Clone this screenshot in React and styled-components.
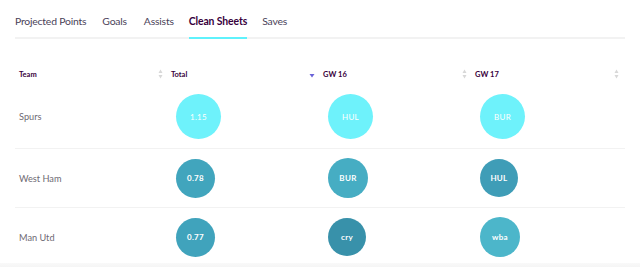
import React from 'react';
import styled, { createGlobalStyle } from 'styled-components';

const GlobalStyle = createGlobalStyle`
body {
  margin: 0;
  background: #fff;
  font-family: Lato, "Open Sans", sans-serif;
}
`;

const Page = styled.div`
padding: 0 15px;
width: 610px;
`;

const Tabs = styled.div`
display: flex;
border-bottom: 2px solid #f2f2f2;
height: 37px;
`;

const Tab = styled.div`
font-size: 10.4px;
letter-spacing: ${p => (p.active ? '-0.1px' : '-0.2px')};
line-height: 14px;
padding-top: 14px;
margin-right: ${p => p.gap}px;
color: ${p => (p.active ? '#37003c' : '#4a4258')};
font-weight: ${p => (p.active ? 700 : 400)};
border-bottom: 2px solid ${p => (p.active ? '#5ff2fc' : 'transparent')};
margin-bottom: -2px;
`;

const Table = styled.div`
margin-top: 24px;
`;

const Row = styled.div`
display: grid;
grid-template-columns: repeat(4, 152px);
align-items: center;
padding: 9px 0;
border-top: ${p => (p.first ? 'none' : '1px solid #f2f2f2')};
`;

const HeadRow = styled(Row)`
padding: 0;
height: 22px;
`;

const HeadCell = styled.div`
display: flex;
justify-content: space-between;
align-items: center;
padding: 0 4px;
font-size: 7.5px;
font-weight: 700;
color: #37003c;
`;

const TeamName = styled.div`
padding-left: 4px;
font-size: 9.2px;
color: #6e6a73;
`;

const Cell = styled.div`
padding-left: 9px;
display: flex;
`;

const Bubble = styled.div`
width: ${p => p.size}px;
height: ${p => p.size}px;
border-radius: 50%;
background: ${p => p.bg};
color: #fff;
font-size: 8px;
font-weight: ${p => (p.light ? 400 : 700)};
letter-spacing: 0.3px;
display: flex;
align-items: center;
justify-content: center;
`;

const BottomFade = styled.div`
position: fixed;
left: 0;
right: 0;
bottom: 0;
height: 4px;
background: linear-gradient(#f9f9f9, #f5f5f5);
`;

const SortBoth = () => (
  <svg width="5" height="10" viewBox="0 0 5 10">
    <path d="M2.5 0.5 L4.5 4 L0.5 4 Z" fill="#d8d8d8" />
    <path d="M2.5 9.5 L4.5 6 L0.5 6 Z" fill="#d8d8d8" />
  </svg>
);

const SortDown = () => (
  <svg width="6" height="10" viewBox="0 0 6 10">
    <path d="M0.5 5 L5.5 5 L3 8.5 Z" fill="#6a63d8" />
  </svg>
);

const tabs = [
  ['Projected Points', 16],
  ['Goals', 17],
  ['Assists', 15],
  ['Clean Sheets', 15],
  ['Saves', 0],
];

const rows = [
  { team: 'Spurs', cells: [['1.15', '#6ef2fb', 45, true], ['HUL', '#6ef2fb', 45, true], ['BUR', '#6ef2fb', 45, true]] },
  { team: 'West Ham', cells: [['0.78', '#41a5bd', 39], ['BUR', '#46adc3', 40], ['HUL', '#3f9db7', 38]] },
  { team: 'Man Utd', cells: [['0.77', '#40a3bc', 39], ['cry', '#3891aa', 38], ['wba', '#4cb6ca', 40]] },
];

const App = () => (
  <Page>
    <GlobalStyle />
    <Tabs>
      {tabs.map(([label, gap]) => (
        <Tab key={label} gap={gap} active={label === 'Clean Sheets'}>{label}</Tab>
      ))}
    </Tabs>
    <Table>
      <HeadRow first>
        <HeadCell>Team<SortBoth /></HeadCell>
        <HeadCell>Total<SortDown /></HeadCell>
        <HeadCell>GW 16<SortBoth /></HeadCell>
        <HeadCell>GW 17<SortBoth /></HeadCell>
      </HeadRow>
      {rows.map((r, i) => (
        <Row key={r.team} first={i === 0}>
          <TeamName>{r.team}</TeamName>
          {r.cells.map(([label, bg, size, light], j) => (
            <Cell key={j}>
              <Bubble bg={bg} size={size} light={light}>{label}</Bubble>
            </Cell>
          ))}
        </Row>
      ))}
    </Table>
    <BottomFade />
  </Page>
);

export default App;
